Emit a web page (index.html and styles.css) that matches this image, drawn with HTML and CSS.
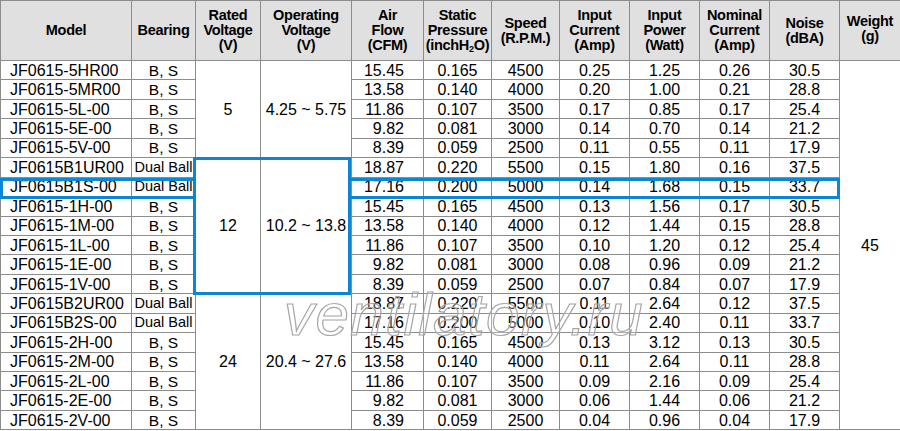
FILE: index.html
```html
<!DOCTYPE html>
<html>
<head>
<meta charset="utf-8">
<title>JF0615 fan specifications</title>
<link rel="stylesheet" href="styles.css">
</head>
<body>
<div class="sheet">
  <table class="spec">
    <colgroup>
      <col class="c-model"><col class="c-bearing"><col class="c-rated"><col class="c-oper">
      <col class="c-air"><col class="c-static"><col class="c-speed"><col class="c-icur">
      <col class="c-ipow"><col class="c-ncur"><col class="c-noise"><col class="c-weight">
    </colgroup>
    <thead>
      <tr>
        <th>Model</th>
        <th>Bearing</th>
        <th>Rated<br>Voltage<br>(V)</th>
        <th>Operating<br>Voltage<br>(V)</th>
        <th>Air<br>Flow<br>(CFM)</th>
        <th>Static<br>Pressure<br>(inchH<sub>2</sub>O)</th>
        <th>Speed<br>(R.P.M.)</th>
        <th>Input<br>Current<br>(Amp)</th>
        <th>Input<br>Power<br>(Watt)</th>
        <th>Nominal<br>Current<br>(Amp)</th>
        <th>Noise<br>(dBA)</th>
        <th class="h-weight">Weight<br>(g)</th>
      </tr>
    </thead>
    <tbody>
      <tr><td class="model">JF0615-5HR00</td><td class="bear">B, S</td><td rowspan="5">5</td><td rowspan="5">4.25 ~ 5.75</td><td class="air">15.45</td><td>0.165</td><td>4500</td><td>0.25</td><td>1.25</td><td>0.26</td><td>30.5</td><td rowspan="19">45</td></tr>
      <tr><td class="model">JF0615-5MR00</td><td class="bear">B, S</td><td class="air">13.58</td><td>0.140</td><td>4000</td><td>0.20</td><td>1.00</td><td>0.21</td><td>28.8</td></tr>
      <tr><td class="model">JF0615-5L-00</td><td class="bear">B, S</td><td class="air">11.86</td><td>0.107</td><td>3500</td><td>0.17</td><td>0.85</td><td>0.17</td><td>25.4</td></tr>
      <tr><td class="model">JF0615-5E-00</td><td class="bear">B, S</td><td class="air">9.82</td><td>0.081</td><td>3000</td><td>0.14</td><td>0.70</td><td>0.14</td><td>21.2</td></tr>
      <tr><td class="model">JF0615-5V-00</td><td class="bear">B, S</td><td class="air">8.39</td><td>0.059</td><td>2500</td><td>0.11</td><td>0.55</td><td>0.11</td><td>17.9</td></tr>
      <tr><td class="model">JF0615B1UR00</td><td class="bear dual">Dual Ball</td><td rowspan="7">12</td><td rowspan="7">10.2 ~ 13.8</td><td class="air">18.87</td><td>0.220</td><td>5500</td><td>0.15</td><td>1.80</td><td>0.16</td><td>37.5</td></tr>
      <tr><td class="model">JF0615B1S-00</td><td class="bear dual">Dual Ball</td><td class="air">17.16</td><td>0.200</td><td>5000</td><td>0.14</td><td>1.68</td><td>0.15</td><td>33.7</td></tr>
      <tr><td class="model">JF0615-1H-00</td><td class="bear">B, S</td><td class="air">15.45</td><td>0.165</td><td>4500</td><td>0.13</td><td>1.56</td><td>0.17</td><td>30.5</td></tr>
      <tr><td class="model">JF0615-1M-00</td><td class="bear">B, S</td><td class="air">13.58</td><td>0.140</td><td>4000</td><td>0.12</td><td>1.44</td><td>0.15</td><td>28.8</td></tr>
      <tr><td class="model">JF0615-1L-00</td><td class="bear">B, S</td><td class="air">11.86</td><td>0.107</td><td>3500</td><td>0.10</td><td>1.20</td><td>0.12</td><td>25.4</td></tr>
      <tr><td class="model">JF0615-1E-00</td><td class="bear">B, S</td><td class="air">9.82</td><td>0.081</td><td>3000</td><td>0.08</td><td>0.96</td><td>0.09</td><td>21.2</td></tr>
      <tr><td class="model">JF0615-1V-00</td><td class="bear">B, S</td><td class="air">8.39</td><td>0.059</td><td>2500</td><td>0.07</td><td>0.84</td><td>0.07</td><td>17.9</td></tr>
      <tr><td class="model">JF0615B2UR00</td><td class="bear dual">Dual Ball</td><td rowspan="7">24</td><td rowspan="7">20.4 ~ 27.6</td><td class="air">18.87</td><td>0.220</td><td>5500</td><td>0.11</td><td>2.64</td><td>0.12</td><td>37.5</td></tr>
      <tr><td class="model">JF0615B2S-00</td><td class="bear dual">Dual Ball</td><td class="air">17.16</td><td>0.200</td><td>5000</td><td>0.10</td><td>2.40</td><td>0.11</td><td>33.7</td></tr>
      <tr><td class="model">JF0615-2H-00</td><td class="bear">B, S</td><td class="air">15.45</td><td>0.165</td><td>4500</td><td>0.13</td><td>3.12</td><td>0.13</td><td>30.5</td></tr>
      <tr><td class="model">JF0615-2M-00</td><td class="bear">B, S</td><td class="air">13.58</td><td>0.140</td><td>4000</td><td>0.11</td><td>2.64</td><td>0.11</td><td>28.8</td></tr>
      <tr><td class="model">JF0615-2L-00</td><td class="bear">B, S</td><td class="air">11.86</td><td>0.107</td><td>3500</td><td>0.09</td><td>2.16</td><td>0.09</td><td>25.4</td></tr>
      <tr><td class="model">JF0615-2E-00</td><td class="bear">B, S</td><td class="air">9.82</td><td>0.081</td><td>3000</td><td>0.06</td><td>1.44</td><td>0.06</td><td>21.2</td></tr>
      <tr><td class="model">JF0615-2V-00</td><td class="bear">B, S</td><td class="air">8.39</td><td>0.059</td><td>2500</td><td>0.04</td><td>0.96</td><td>0.04</td><td>17.9</td></tr>
    </tbody>
  </table>
  <div class="mark mark-volt"></div>
  <div class="mark mark-row-left"></div>
  <div class="mark mark-row-right"></div>
  <div class="watermark">ventilatory.ru</div>
</div>
</body>
</html>
```
FILE: styles.css
```css
html, body {
  margin: 0;
  padding: 0;
  background: #ffffff;
}

.sheet {
  position: relative;
  width: 900px;
  height: 431px;
  overflow: hidden;
  font-family: "Liberation Sans", Arial, sans-serif;
  color: #000000;
}

.spec {
  width: 900px;
  table-layout: fixed;
  border-collapse: collapse;
}

.c-model { width: 131px; }
.c-bearing { width: 64px; }
.c-rated { width: 65px; }
.c-oper { width: 91px; }
.c-air { width: 72px; }
.c-static { width: 68px; }
.c-speed { width: 68px; }
.c-icur { width: 70px; }
.c-ipow { width: 70px; }
.c-ncur { width: 70px; }
.c-noise { width: 70px; }
.c-weight { width: 61px; }

.spec th,
.spec td {
  border: 1px solid #8c8c8c;
  padding: 0;
  text-align: center;
  vertical-align: middle;
  white-space: nowrap;
  overflow: hidden;
}

.spec thead tr {
  height: 60px;
}

.spec th {
  background: #e0e0e0;
  font-weight: bold;
  font-size: 14.5px;
  line-height: 15px;
  letter-spacing: -0.3px;
  color: #000000;
}

.spec th sub {
  font-size: 9px;
  line-height: 0;
  vertical-align: -2px;
}

.spec th.h-weight {
  padding-bottom: 4px;
}

.spec tbody tr {
  height: 19.45px;
}

.spec td {
  font-size: 16px;
  line-height: 17px;
}

.spec td.model {
  text-align: left;
  padding-left: 9px;
}

.spec td.bear {
  font-size: 15.5px;
}

.spec td.dual {
  font-size: 14.5px;
}

.spec td.air {
  text-align: right;
  padding-right: 19px;
}

.mark {
  position: absolute;
  box-sizing: border-box;
  border: 3px solid #0a86d4;
  pointer-events: none;
}

.mark-volt {
  left: 193px;
  top: 157px;
  width: 158px;
  height: 138px;
}

.mark-row-left {
  left: 0;
  top: 178px;
  width: 196px;
  height: 21px;
  border-right: none;
}

.mark-row-right {
  left: 348px;
  top: 178px;
  width: 492px;
  height: 21px;
  border-left: none;
}

.watermark {
  position: absolute;
  left: 284px;
  top: 280px;
  font-family: "Liberation Sans", Arial, sans-serif;
  font-style: italic;
  font-size: 60px;
  line-height: 70px;
  letter-spacing: 1.5px;
  color: rgba(255, 255, 255, 0.25);
  -webkit-text-stroke: 1.2px #a6a6a6;
  white-space: nowrap;
  pointer-events: none;
}
```
